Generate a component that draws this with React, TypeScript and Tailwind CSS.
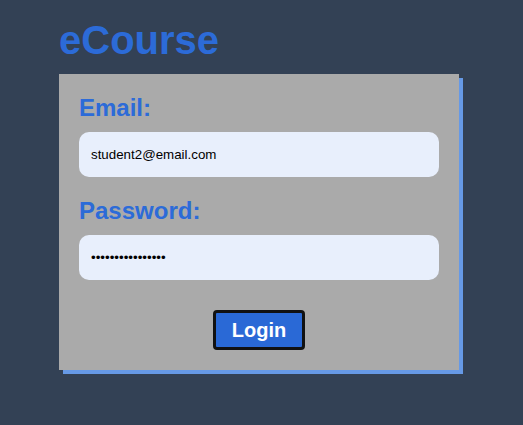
import React from "react";

export default function App() {
  return (
    <div className="min-h-[425px] w-full bg-[#334155] pl-[59px] pt-[20px] font-['Liberation_Sans',Arial,sans-serif]">
      <h1 className="text-[40px] leading-[40px] font-bold text-[#2c6bd8]">eCourse</h1>
      <div className="mt-[14px] w-[400px] bg-[#aaaaaa] px-[20px] pt-[20px] pb-[20px] shadow-[4px_4px_0_0_#6699e6]">
        <label className="block text-[24px] leading-[28px] font-bold text-[#2c6bd8]">Email:</label>
        <input
          readOnly
          value="student2@email.com"
          className="mt-[10px] block h-[45px] w-[360px] rounded-[10px] bg-[#e8effc] px-[12px] text-[13.33px] text-black outline-none"
        />
        <label className="mt-[20px] block text-[24px] leading-[28px] font-bold text-[#2c6bd8]">Password:</label>
        <input
          readOnly
          type="password"
          value="aaaaaaaaaaaaaaaa"
          className="mt-[10px] block h-[45px] w-[360px] rounded-[10px] bg-[#e8effc] px-[12px] text-[13.33px] text-black outline-none"
        />
        <div className="mt-[30px] flex justify-center">
          <button className="h-[40px] w-[92px] rounded-[4px] border-[3px] border-[#111111] bg-[#2a69d6] text-[20px] leading-[24px] font-bold text-white">
            Login
          </button>
        </div>
      </div>
    </div>
  );
}
